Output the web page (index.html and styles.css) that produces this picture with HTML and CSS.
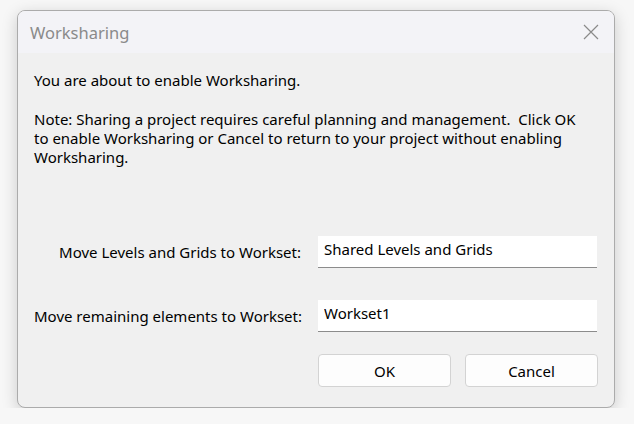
FILE: index.html
```html
<!DOCTYPE html>
<html lang="en">
<head>
    <meta charset="UTF-8">
    <title>Worksharing</title>
    <link rel="stylesheet" href="styles.css">
</head>
<body>
    <div class="dialog">
        <div class="titlebar">
            <span class="title">Worksharing</span>
            <button class="close" aria-label="Close">
                <svg width="16" height="16" viewBox="0 0 16 16">
                    <path d="M1 1 L15 15 M15 1 L1 15" stroke="#8a8a8a" stroke-width="1.2" fill="none"/>
                </svg>
            </button>
        </div>

        <div class="content">
            <p class="intro">You are about to enable Worksharing.</p>
            <p class="note">Note: Sharing a project requires careful planning and management.&nbsp; Click OK to enable Worksharing or Cancel to return to your project without enabling Worksharing.</p>

            <div class="form">
                <label class="field-label">Move Levels and Grids to Workset:</label>
                <input class="field" type="text" value="Shared Levels and Grids">
                <label class="field-label">Move remaining elements to Workset:</label>
                <input class="field" type="text" value="Workset1">
            </div>

            <div class="actions">
                <button class="btn">OK</button>
                <button class="btn">Cancel</button>
            </div>
        </div>
    </div>
</body>
</html>
```

FILE: styles.css
```css
/* Page */
body {
    margin: 0;
    padding: 10px 0 0 17px;
    background-color: #f7f7f7;
    font-family: "Noto Sans", "Open Sans", sans-serif;
    font-size: 15px;
    color: #000;
}

/* Dialog window */
.dialog {
    width: 596px;
    height: 396px;
    border: 1px solid #ababab;
    border-radius: 8px;
    background-color: #f0f0f0;
    box-shadow: 0 4px 16px rgba(0, 0, 0, 0.18);
    overflow: hidden;
    display: flex;
    flex-direction: column;
}

.titlebar {
    height: 42px;
    flex: none;
    display: flex;
    align-items: center;
    justify-content: space-between;
    padding: 0 15px 0 12px;
    background-color: #f3f3f7;
}

.title {
    font-size: 16.5px;
    color: #8a8a8a;
}

.close {
    border: none;
    background: none;
    padding: 0;
    width: 16px;
    height: 16px;
    display: flex;
}

/* Body */
.content {
    padding: 18px 16px 0 16px;
    display: flex;
    flex-direction: column;
    flex: 1;
}

.content p {
    margin: 0;
    line-height: 19px;
}

.note {
    margin-top: 20px !important;
    width: 552px;
}

.form {
    margin-top: 69px;
    display: grid;
    grid-template-columns: 267px 279px;
    column-gap: 17px;
    row-gap: 32px;
    align-items: center;
}

.field-label {
    text-align: right;
    white-space: nowrap;
}

.field {
    height: 32px;
    box-sizing: border-box;
    border: none;
    border-bottom: 1px solid #8c8c8c;
    background-color: #fff;
    padding: 0 6px 5px;
    font: inherit;
    color: #000;
    outline: none;
}

.actions {
    margin-top: 22px;
    display: flex;
    gap: 14px;
    padding-left: 284px;
}

.btn {
    width: 133px;
    height: 33px;
    background-color: #fdfdfd;
    border: 1px solid #d3d3d3;
    border-radius: 4px;
    font: inherit;
    color: #000;
    padding: 0;
}
```
